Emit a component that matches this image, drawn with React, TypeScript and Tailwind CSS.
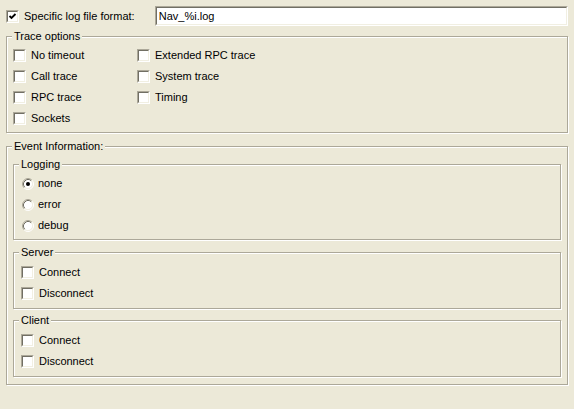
import type { ReactNode } from "react";

// Windows XP classic colours
const face = "bg-[#ECE9D8]";

const CheckBox = ({ checked = false }: { checked?: boolean }) => (
  <span className="block w-[13px] h-[13px] shrink-0 border border-t-[#ACA899] border-l-[#ACA899] border-b-white border-r-white">
    <span className="block w-[11px] h-[11px] border border-t-[#716F64] border-l-[#716F64] border-b-[#F1EFE2] border-r-[#F1EFE2] bg-white">
      {checked && (
        <svg width="9" height="9" viewBox="0 0 9 9" className="block">
          <path d="M1.5 4 L3.5 6 L7.5 2" fill="none" stroke="#000" strokeWidth="1.8" />
        </svg>
      )}
    </span>
  </span>
);

const Radio = ({ checked = false }: { checked?: boolean }) => (
  <svg width="12" height="12" viewBox="0 0 12 12" className="block shrink-0">
    <circle cx="6" cy="6" r="4.5" fill="#fff" />
    <path d="M2.11 9.89 A5.5 5.5 0 0 1 9.89 2.11" fill="none" stroke="#ACA899" />
    <path d="M9.89 2.11 A5.5 5.5 0 0 1 2.11 9.89" fill="none" stroke="#fff" />
    <path d="M2.82 9.18 A4.5 4.5 0 0 1 9.18 2.82" fill="none" stroke="#716F64" />
    <path d="M9.18 2.82 A4.5 4.5 0 0 1 2.82 9.18" fill="none" stroke="#F1EFE2" />
    {checked && <circle cx="6" cy="6" r="2" fill="#000" />}
  </svg>
);

const CheckRow = ({ label }: { label: string }) => (
  <div className="flex items-center h-[21px] gap-[5px]">
    <CheckBox />
    <span>{label}</span>
  </div>
);

const RadioRow = ({ label, checked }: { label: string; checked?: boolean }) => (
  <div className="flex items-center h-[21px] gap-[4px]">
    <Radio checked={checked} />
    <span>{label}</span>
  </div>
);

const Group = ({
  title,
  className,
  children,
}: {
  title: string;
  className: string;
  children: ReactNode;
}) => (
  <div
    className={`relative border border-[#ACA899] shadow-[inset_1px_1px_0_#fff,1px_1px_0_#fff] ${className}`}
  >
    <span className={`absolute -top-[8px] left-[5px] px-[2px] leading-[14px] ${face}`}>
      {title}
    </span>
    {children}
  </div>
);

export default function App() {
  return (
    <div
      className={`w-[574px] h-[409px] ${face} text-black text-[11px] leading-[13px] px-[6px] pt-[6px] overflow-hidden`}
      style={{ fontFamily: '"Liberation Sans", Arial, sans-serif' }}
    >
      {/* Log file format */}
      <div className="flex items-center h-[20px]">
        <div className="flex items-center gap-[5px] w-[149px]">
          <CheckBox checked />
          <span>Specific log file format:</span>
        </div>
        <div className="w-[414px] h-[20px] border border-t-[#ACA899] border-l-[#ACA899] border-b-white border-r-white">
          <div className="h-full border border-t-[#716F64] border-l-[#716F64] border-b-[#F1EFE2] border-r-[#F1EFE2] bg-white pl-[2px] flex items-center">
            Nav_%i.log
          </div>
        </div>
      </div>

      {/* Trace options */}
      <Group title="Trace options" className="mt-[10px] w-[562px] pt-[8px] pb-[3px] pl-[6px]">
        <div className="flex">
          <div className="w-[124px] flex flex-col">
            <CheckRow label="No timeout" />
            <CheckRow label="Call trace" />
            <CheckRow label="RPC trace" />
            <CheckRow label="Sockets" />
          </div>
          <div className="flex flex-col">
            <CheckRow label="Extended RPC trace" />
            <CheckRow label="System trace" />
            <CheckRow label="Timing" />
          </div>
        </div>
      </Group>

      {/* Event information */}
      <Group title="Event Information:" className="mt-[13px] w-[562px] pt-[17px] pb-[7px] px-[6px]">
        <Group title="Logging" className="pt-[8px] pb-[3px] pl-[8px]">
          <RadioRow label="none" checked />
          <RadioRow label="error" />
          <RadioRow label="debug" />
        </Group>
        <Group title="Server" className="mt-[12px] pt-[9px] pb-[4px] pl-[7px]">
          <CheckRow label="Connect" />
          <CheckRow label="Disconnect" />
        </Group>
        <Group title="Client" className="mt-[11px] pt-[9px] pb-[4px] pl-[7px]">
          <CheckRow label="Connect" />
          <CheckRow label="Disconnect" />
        </Group>
      </Group>
    </div>
  );
}
